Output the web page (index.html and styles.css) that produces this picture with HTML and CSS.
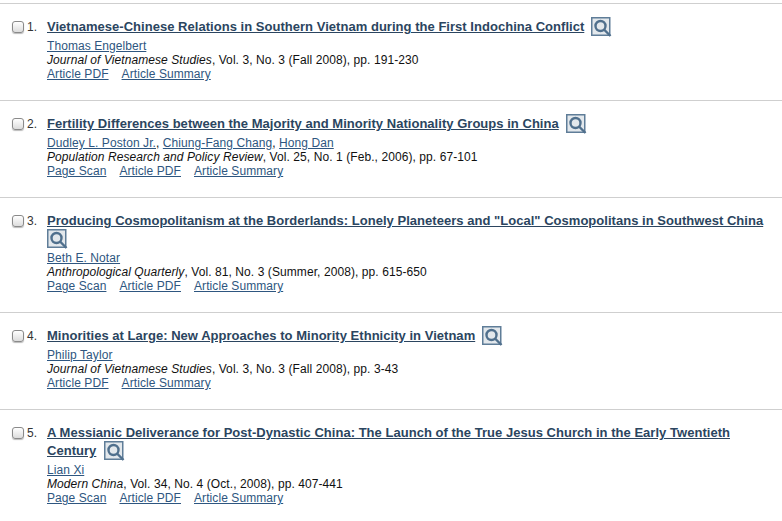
FILE: index.html
```html
<!DOCTYPE html>
<html lang="en">
<head>
    <meta charset="UTF-8">
    <title>Search Results</title>
    <link rel="stylesheet" href="styles.css">
</head>
<body>
    <svg class="icon-defs" width="0" height="0">
        <symbol id="zoom" viewBox="0 0 21 20">
            <rect x="0.75" y="0.75" width="18" height="17.5" fill="#e3e8ec" stroke="#5f7d98" stroke-width="1.5"/>
            <circle cx="9.5" cy="9" r="5" fill="none" stroke="#50708d" stroke-width="2.4"/>
            <path d="M13 12.5 L19.5 19" stroke="#50708d" stroke-width="2.4"/>
        </symbol>
    </svg>
    <ol class="results">
        <li class="result">
            <input class="check" type="checkbox">
            <span class="num">1.</span>
            <div class="body">
                <div class="title"><a href="#">Vietnamese-Chinese Relations in Southern Vietnam during the First Indochina Conflict</a> <svg class="zoom"><use href="#zoom"/></svg></div>
                <div class="line"><a href="#">Thomas Engelbert</a></div>
                <div class="line"><em>Journal of Vietnamese Studies</em>, Vol. 3, No. 3 (Fall 2008), pp. 191-230</div>
                <div class="links"><a href="#">Article PDF</a><a href="#">Article Summary</a></div>
            </div>
        </li>
        <li class="result">
            <input class="check" type="checkbox">
            <span class="num">2.</span>
            <div class="body">
                <div class="title"><a href="#">Fertility Differences between the Majority and Minority Nationality Groups in China</a> <svg class="zoom"><use href="#zoom"/></svg></div>
                <div class="line"><a href="#">Dudley L. Poston Jr.</a>, <a href="#">Chiung-Fang Chang</a>, <a href="#">Hong Dan</a></div>
                <div class="line"><em>Population Research and Policy Review</em>, Vol. 25, No. 1 (Feb., 2006), pp. 67-101</div>
                <div class="links"><a href="#">Page Scan</a><a href="#">Article PDF</a><a href="#">Article Summary</a></div>
            </div>
        </li>
        <li class="result">
            <input class="check" type="checkbox">
            <span class="num">3.</span>
            <div class="body">
                <div class="title"><a href="#">Producing Cosmopolitanism at the Borderlands: Lonely Planeteers and "Local" Cosmopolitans in Southwest China</a> <svg class="zoom"><use href="#zoom"/></svg></div>
                <div class="line"><a href="#">Beth E. Notar</a></div>
                <div class="line"><em>Anthropological Quarterly</em>, Vol. 81, No. 3 (Summer, 2008), pp. 615-650</div>
                <div class="links"><a href="#">Page Scan</a><a href="#">Article PDF</a><a href="#">Article Summary</a></div>
            </div>
        </li>
        <li class="result">
            <input class="check" type="checkbox">
            <span class="num">4.</span>
            <div class="body">
                <div class="title"><a href="#">Minorities at Large: New Approaches to Minority Ethnicity in Vietnam</a> <svg class="zoom"><use href="#zoom"/></svg></div>
                <div class="line"><a href="#">Philip Taylor</a></div>
                <div class="line"><em>Journal of Vietnamese Studies</em>, Vol. 3, No. 3 (Fall 2008), pp. 3-43</div>
                <div class="links"><a href="#">Article PDF</a><a href="#">Article Summary</a></div>
            </div>
        </li>
        <li class="result">
            <input class="check" type="checkbox">
            <span class="num">5.</span>
            <div class="body">
                <div class="title"><a href="#">A Messianic Deliverance for Post-Dynastic China: The Launch of the True Jesus Church in the Early Twentieth Century</a> <svg class="zoom"><use href="#zoom"/></svg></div>
                <div class="line"><a href="#">Lian Xi</a></div>
                <div class="line"><em>Modern China</em>, Vol. 34, No. 4 (Oct., 2008), pp. 407-441</div>
                <div class="links"><a href="#">Page Scan</a><a href="#">Article PDF</a><a href="#">Article Summary</a></div>
            </div>
        </li>
    </ol>
</body>
</html>
```
FILE: styles.css
```css
body {
    font-family: "Liberation Sans", Arial, sans-serif;
    font-size: 12px;
    letter-spacing: 0.08px;
    color: #111;
    background: #fff;
    margin: 0;
    padding: 3px 0 0;
}
a {
    color: #2e5680;
    text-decoration: underline;
}
.icon-defs {
    display: block;
    height: 0;
}
.results {
    list-style: none;
    margin: 0;
    padding: 0;
}
.result {
    display: flex;
    align-items: flex-start;
    border-top: 1px solid #cfcfcf;
    padding: 14px 0 19px 12px;
    line-height: 14px;
}
.check {
    appearance: none;
    width: 12px;
    height: 12px;
    margin: 3px 3px 0 0;
    flex: none;
    border: 1px solid #8a8a8a;
    border-radius: 3px;
    background: linear-gradient(#fff, #dcdcdc);
    box-shadow: 0 1px 1px #bbb;
}
.num {
    width: 20px;
    flex: none;
    margin-top: 2px;
    color: #333;
}
.body {
    flex: 1;
    padding-right: 10px;
}
.title {
    font-size: 13px;
    font-weight: bold;
    letter-spacing: 0.03px;
    word-spacing: 3.5px;
    line-height: 18px;
    margin-bottom: 3px;
}
.title a {
    color: #2b4560;
    word-spacing: 0;
}
.zoom {
    width: 21px;
    height: 20px;
    margin: -3px 0;
    vertical-align: -3px;
}
.links a {
    margin-right: 13px;
}
```
